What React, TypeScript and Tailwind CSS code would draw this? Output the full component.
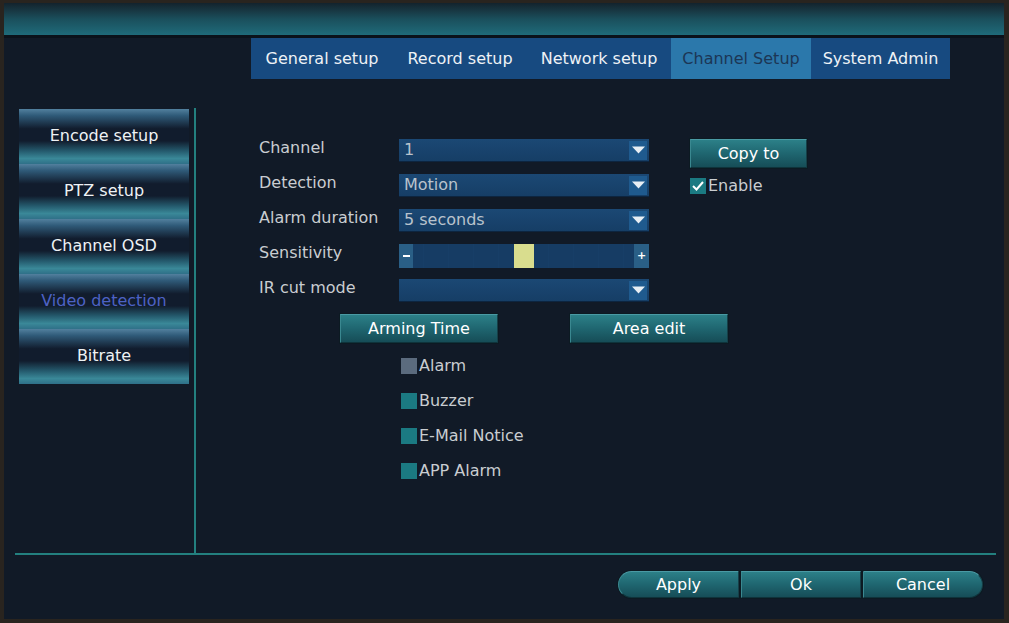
const font = "font-['DejaVu_Sans',Verdana,sans-serif]";

const tabs = ["General setup", "Record setup", "Network setup", "Channel Setup", "System Admin"];
const tabWidths = ["w-[142px]", "w-[134px]", "w-[144px]", "w-[140px]", "w-[139px]"];
const sideItems = ["Encode setup", "PTZ setup", "Channel OSD", "Video detection", "Bitrate"];

function Arrow() {
  return (
    <div className="flex h-full w-[18px] items-center justify-center bg-[#1f5a8e]">
      <svg width="13" height="8" viewBox="0 0 13 8">
        <path d="M0 0.5 H13 L6.5 7.5 Z" fill="#e8eef4" />
      </svg>
    </div>
  );
}

function Select({ value }: { value: string }) {
  return (
    <div className="flex h-[23px] w-[250px] items-center justify-between border-b border-[#0d2540] bg-gradient-to-b from-[#1b4874] to-[#163e66] pl-[5px] pr-[2px]">
      <span className="text-[16px] leading-none text-[#b9c3cd]">{value}</span>
      <div className="h-[19px]">
        <Arrow />
      </div>
    </div>
  );
}

function Slider() {
  return (
    <div className="flex h-[24px] w-[250px] items-stretch bg-[#163c64] bg-[repeating-linear-gradient(to_right,transparent_0px,transparent_24px,#173e67_24px,#173e67_25px)]">
      <div className="flex w-[14px] items-center justify-center bg-[#2a5f86]">
        <div className="h-[2px] w-[7px] bg-white" />
      </div>
      <div className="flex-1">
        <div className="ml-[101px] h-full w-[20px] bg-[#d9dd8e]" />
      </div>
      <div className="flex w-[15px] items-center justify-center bg-[#2a5f86] text-[11px] font-bold leading-none text-white">
        +
      </div>
    </div>
  );
}

function TealButton({ label, className }: { label: string; className: string }) {
  return (
    <div
      className={`flex items-center justify-center border border-t-[#4a9aa4] border-l-[#3a8890] border-r-[#173f48] border-b-[#0f333b] bg-gradient-to-b from-[#2c8088] via-[#1f6670] to-[#164d57] text-[16px] text-white shadow-[0_0_0_1px_#0c1a22] ${className}`}
    >
      {label}
    </div>
  );
}

function Row({ label, children }: { label: string; children: React.ReactNode }) {
  return (
    <div className="flex h-[23px] items-center">
      <div className="mb-[6px] w-[140px] text-[16px] leading-none text-[#c9cdd1]">{label}</div>
      {children}
    </div>
  );
}

function Check({ label, gray }: { label: string; gray?: boolean }) {
  return (
    <div className="flex h-[16px] items-center gap-[2px]">
      <div className={`h-[16px] w-[16px] ${gray ? "bg-[#5b6b7e]" : "bg-[#1b7a82]"}`} />
      <span className="text-[16px] leading-none text-[#c9cdd1]">{label}</span>
    </div>
  );
}

export default function App() {
  return (
    <div className={`h-[623px] w-[1009px] overflow-hidden bg-[#29241f] pb-[4px] pl-[4px] pr-[5px] pt-[3px] ${font}`}>
      <div className="flex h-full flex-col bg-[#111a27]">
        <div className="h-[32px] bg-gradient-to-b from-[#13232d] via-[#1a4f5c] to-[#1f6b7a]" />
        <div className="h-[3px] bg-[#0b121b]" />

        <div className="flex h-[41px] pl-[247px]">
          {tabs.map((t, i) => (
            <div
              key={t}
              className={`flex items-center justify-center text-[16px] ${tabWidths[i]} ${
                i === 3 ? "bg-[#2b78ab] text-[#1c3655]" : "bg-[#174a80] text-[#eef2f6]"
              }`}
            >
              {t}
            </div>
          ))}
        </div>

        <div className="ml-[11px] mt-[29px] flex h-[447px] w-[981px] border-b-2 border-[#23807f]">
          <div className="w-[181px] border-r-2 border-[#23807f] pl-[4px] pt-[1px]">
            {sideItems.map((s, i) => (
              <div
                key={s}
                className={`flex h-[55px] w-[170px] items-center justify-center bg-[linear-gradient(to_bottom,#52809e_0%,#2f5a78_12%,#111c2d_36%,#111c2d_58%,#24596c_76%,#3a8898_90%,#2f7088_100%)] pb-[1px] text-[16px] ${
                  i === 3 ? "text-[#4d62c4]" : "text-[#eef2f5]"
                }`}
              >
                {s}
              </div>
            ))}
          </div>

          <div className="flex-1 pl-[63px] pt-[31px]">
            <div className="flex">
              <div className="flex flex-col gap-[12px]">
                <Row label="Channel">
                  <Select value="1" />
                </Row>
                <Row label="Detection">
                  <Select value="Motion" />
                </Row>
                <Row label="Alarm duration">
                  <Select value="5 seconds" />
                </Row>
                <Row label="Sensitivity">
                  <Slider />
                </Row>
                <Row label="IR cut mode">
                  <Select value="" />
                </Row>
              </div>
              <div className="ml-[41px] flex flex-col">
                <TealButton label="Copy to" className="h-[29px] w-[117px]" />
                <div className="mt-[10px] flex items-center gap-[2px]">
                  <div className="flex h-[16px] w-[16px] items-center justify-center bg-[#1b7a82]">
                    <svg width="12" height="10" viewBox="0 0 12 10">
                      <path d="M1 5 L4.5 8.5 L11 1" stroke="white" strokeWidth="2" fill="none" />
                    </svg>
                  </div>
                  <span className="text-[16px] leading-none text-[#c9cdd1]">Enable</span>
                </div>
              </div>
            </div>

            <div className="ml-[81px] mt-[12px] flex gap-[72px]">
              <TealButton label="Arming Time" className="h-[29px] w-[158px]" />
              <TealButton label="Area edit" className="h-[29px] w-[158px]" />
            </div>

            <div className="ml-[142px] mt-[15px] flex flex-col gap-[19px]">
              <Check label="Alarm" gray />
              <Check label="Buzzer" />
              <Check label="E-Mail Notice" />
              <Check label="APP Alarm" />
            </div>
          </div>
        </div>

        <div className="mt-[16px] flex justify-end gap-[2px] pr-[21px]">
          <TealButton label="Apply" className="h-[27px] w-[121px] rounded-l-full" />
          <TealButton label="Ok" className="h-[27px] w-[120px]" />
          <TealButton label="Cancel" className="h-[27px] w-[120px] rounded-r-full" />
        </div>
      </div>
    </div>
  );
}
